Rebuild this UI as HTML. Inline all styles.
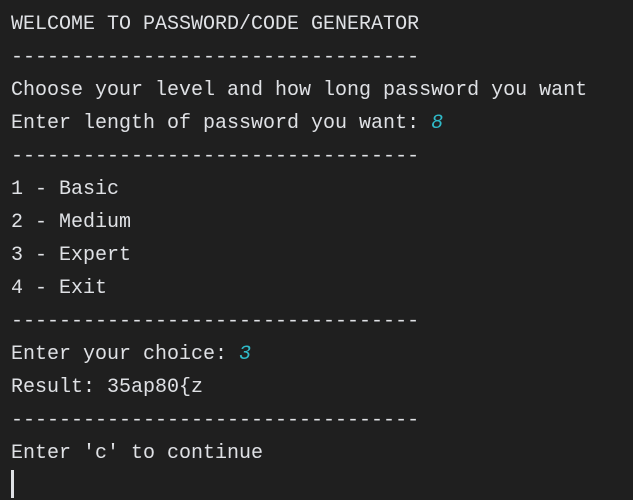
<!DOCTYPE html>
<html><head><meta charset="utf-8"><style>
html,body{margin:0;padding:0;background:#1f1f1f;width:633px;height:500px;overflow:hidden}
pre{margin:0;padding:8px 0 0 11px;font-family:"Liberation Mono","DejaVu Sans Mono",monospace;font-size:20px;line-height:33px;color:#dfe1e5;white-space:pre}
i{color:#2fbac8;font-style:italic}
.cur{position:absolute;left:11px;top:470px;width:3px;height:28px;background:#dfe1e5}
</style></head><body>
<pre>WELCOME TO PASSWORD/CODE GENERATOR
----------------------------------
Choose your level and how long password you want
Enter length of password you want: <i>8</i>
----------------------------------
1 - Basic
2 - Medium
3 - Expert
4 - Exit
----------------------------------
Enter your choice: <i>3</i>
Result: 35ap80{z
----------------------------------
Enter 'c' to continue</pre>
<div class="cur"></div>
</body></html>
